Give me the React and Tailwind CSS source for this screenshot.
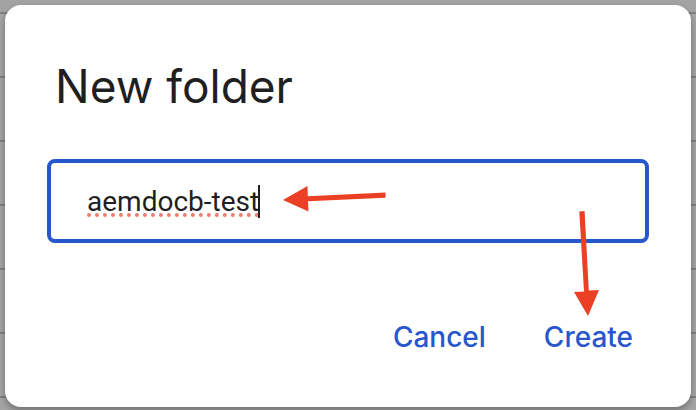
import { useState } from 'react';

function LeftArrow() {
  return (
    <svg className="pointer-events-none absolute top-6 left-[235px] h-8 w-[108px]" viewBox="0 0 108 32" fill="#ec4026" aria-hidden="true">
      <path d="M1 17 L25.5 3 L25.8 13.3 L103.5 9.5 V14.7 L26 18.3 L26.5 28.5 Z" />
    </svg>
  );
}

function DownArrow() {
  return (
    <svg className="pointer-events-none absolute top-[50px] right-[50px] h-28 w-8" viewBox="0 0 32 112" fill="#ec4026" aria-hidden="true">
      <path d="M12.3 2.5 L17.6 2 L21.8 81.4 L32 81 L21 107 L7 83 L17 82.4 Z" />
    </svg>
  );
}

export default function App() {
  const [name, setName] = useState('aemdocb-test');

  return (
    <main className="flex min-h-screen flex-col bg-[#a3a3a3] bg-[linear-gradient(to_bottom,transparent_12px,#808080_12px,#808080_14px,transparent_14px)] bg-[length:100%_64px] px-[5px] pt-[5px] pb-[3px] font-['Roboto',sans-serif]">
      <form
        role="dialog"
        aria-labelledby="dialog-title"
        onSubmit={(e) => e.preventDefault()}
        className="flex grow flex-col rounded-2xl bg-white px-[42px] pt-12 pb-[50px] shadow-[0_3px_6px_#00000050]"
      >
        <h1 id="dialog-title" className="px-2 font-['Inter',sans-serif] text-[46px] leading-[66px] text-[#1f1f1f]">New folder</h1>

        <div className="relative mt-10">
          <input
            type="text"
            aria-labelledby="dialog-title"
            value={name}
            onChange={(e) => setName(e.target.value)}
            spellCheck={false}
            className="block h-[84px] w-full rounded-lg border-4 border-[#2856cd] bg-white px-9 text-[28px] text-[#1f1f1f] outline-none"
          />
          <span className="pointer-events-none absolute top-[54px] left-10 w-[172px] border-b-4 border-dotted border-[#ee7c72]" />
          <span className="pointer-events-none absolute top-[26px] left-[211px] h-[33px] w-0.5 bg-[#1f1f1f]" />
          <LeftArrow />
          <DownArrow />
        </div>

        <div className="mt-auto flex justify-end gap-[58px] pr-4 font-['Inter',sans-serif] text-[28px] leading-[40px] font-medium text-[#2856cd]">
          <button type="button">Cancel</button>
          <button type="submit">Create</button>
        </div>
      </form>
    </main>
  );
}
